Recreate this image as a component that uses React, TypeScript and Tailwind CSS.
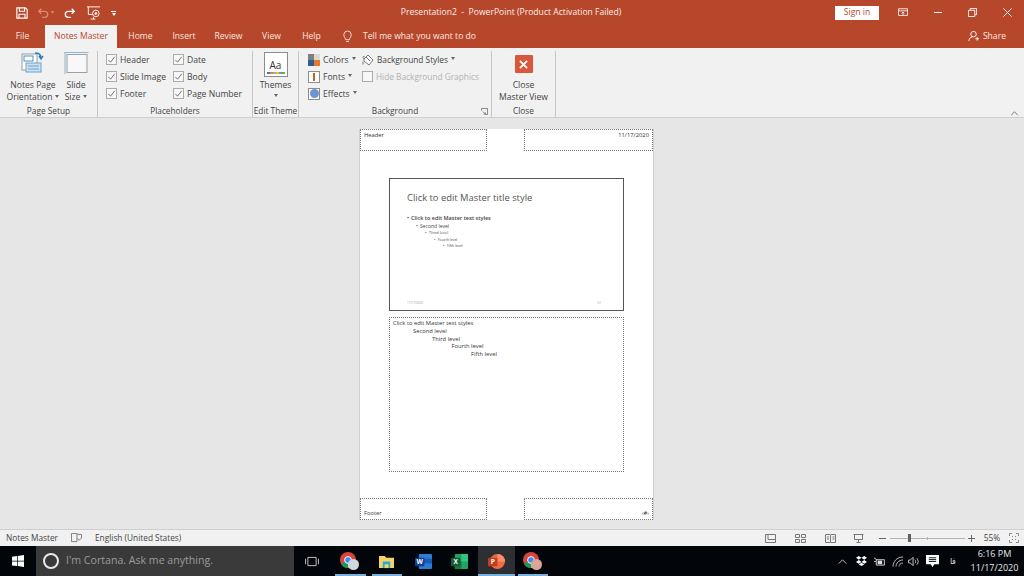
import React from "react";

const Check = ({ label, disabled }: { label: string; disabled?: boolean }) => (
  <div className="flex items-center h-[17px] whitespace-nowrap">
    <div className="w-[11px] h-[11px] border border-[#ababab] bg-[#f7f7f7] flex items-center justify-center">
      {!disabled && (
        <svg viewBox="0 0 10 10" className="w-[9px] h-[9px]" fill="none" stroke="#666" strokeWidth="1">
          <path d="M1.5 5.500 L4 8 L8.500 2" />
        </svg>
      )}
    </div>
    <span className={`ml-[3px] ${disabled ? "text-[#b1b1b1]" : "text-[#444]"}`}>{label}</span>
  </div>
);

const Caret = () => (
  <span className="inline-block ml-[3px] mb-[2px] w-0 h-0 border-x-[2.5px] border-x-transparent border-t-[3px] border-t-[#666] align-middle" />
);

const Group = ({ label, w, children, launcher }: { label: string; w: string; children: React.ReactNode; launcher?: boolean }) => (
  <div className={`${w} relative flex flex-col border-r border-[#c6c6c6] h-full`}>
    <div className="flex-1 min-h-0">{children}</div>
    <div className="h-[12px] leading-[12px] text-center text-[#444] text-[8.3px] whitespace-nowrap">{label}</div>
    {launcher && (
      <svg viewBox="0 0 8 8" className="absolute right-[3px] bottom-[2px] w-[7px] h-[7px]" fill="none" stroke="#777" strokeWidth="1">
        <path d="M.5 3V.5h7v7H5M2 4l3 3M5 5v2H3" />
      </svg>
    )}
  </div>
);

const Tab = ({ label, w }: { label: string; w: string }) => (
  <div className={`${w} h-full flex items-center justify-center text-[#f8e7e1]`}>{label}</div>
);

const Dashed = ({ w, align, valign, children }: { w: string; align: string; valign: string; children?: React.ReactNode }) => (
  <div className={`${w} h-[22px] border border-dotted border-[#777] flex ${align} ${valign} px-[3px] py-[1px] text-[5.8px] leading-[9px] text-[#333]`}>
    {children}
  </div>
);

const TaskApp = ({ active, underline = true, children }: { active?: boolean; underline?: boolean; children: React.ReactNode }) => (
  <div className={`w-[36.5px] h-full relative flex items-center justify-center ${active ? "bg-[#2d2f33]" : ""}`}>
    {children}
    {underline && <div className={`absolute bottom-0 h-[2px] bg-[#76b0dc] ${active ? "left-0 right-0" : "left-[3px] right-[3px]"}`} />}
  </div>
);

const Chrome = ({ face }: { face: string }) => (
  <svg viewBox="0 0 20 20" className="w-[20px] h-[20px]">
    <circle cx="8" cy="9" r="8" fill="#db4437" />
    <path d="M8 9 L1 13 A8 8 0 0 0 8 17 Z" fill="#0f9d58" />
    <path d="M8 9 L8 17 A8 8 0 0 0 16 9 Z" fill="#f4b400" />
    <circle cx="8" cy="9" r="3.400" fill="#4285f4" stroke="#fff" strokeWidth="1" />
    <circle cx="13.500" cy="13.500" r="5.500" fill={face} />
  </svg>
);

const Level = ({ pad, size, line, bold, children }: { pad: string; size: string; line: string; bold?: boolean; children: string }) => (
  <div className={`flex ${pad} ${size} ${line} ${bold ? "font-semibold" : ""}`}>
    <span className="w-[4px] shrink-0">•</span>
    {children}
  </div>
);

export default function App() {
  return (
    <div className="w-[1024px] h-[576px] overflow-hidden flex flex-col bg-[#e6e6e6] text-[8.6px] font-['Open_Sans',sans-serif]">
      {/* title bar */}
      <div className="h-[25px] bg-[#b7472a] flex items-center text-white shrink-0">
        <div className="w-[400px] flex items-center">
          <svg viewBox="0 0 14 14" className="w-[12px] h-[12px] ml-[16px]" fill="none" stroke="#fff" strokeWidth="1.300">
            <path d="M1 1h10l2 2v10H1zM4 1v4h6V1M3.500 13V8.500h7V13" />
          </svg>
          <svg viewBox="0 0 14 14" className="w-[12px] h-[12px] ml-[9px]" fill="none" stroke="#d98a72" strokeWidth="1.500">
            <path d="M5 2 L2 5 L5 8M2 5h7a3 3 0 0 1 0 7H6" />
          </svg>
          <span className="ml-[2px] text-[6px] text-[#d98a72]">▾</span>
          <svg viewBox="0 0 14 14" className="w-[12px] h-[12px] ml-[10px]" fill="none" stroke="#fff" strokeWidth="1.500">
            <path d="M9 2 L12 5 L9 8M12 5H5a3 3 0 0 0 0 7h3" />
          </svg>
          <svg viewBox="0 0 16 16" className="w-[15px] h-[15px] ml-[10px]" fill="none" stroke="#fff" strokeWidth="1">
            <path d="M1 2h14M2.500 2v8h5M8 13v2M5 15h5" />
            <circle cx="10.500" cy="9" r="3.500" />
            <circle cx="10.500" cy="9" r="1" fill="#fff" />
          </svg>
          <span className="ml-[10px] w-[5px] border-t border-white h-[4px] flex items-start justify-center">
            <span className="w-0 h-0 mt-[1px] border-x-[2.5px] border-x-transparent border-t-[3px] border-t-white" />
          </span>
        </div>
        <div className="w-[222px] text-center text-[#fbeee9] whitespace-nowrap">Presentation2 &nbsp;-&nbsp; PowerPoint (Product Activation Failed)</div>
        <div className="flex-1 flex items-center justify-end">
          <div className="w-[44px] h-[14px] bg-white text-[#b7472a] flex items-center justify-center">Sign in</div>
          <svg viewBox="0 0 12 10" className="w-[10px] h-[9px] ml-[19px]" fill="none" stroke="#fff">
            <path d="M.5.5h11v8H.5zM.5 3h11M6 8V4.500M4.500 6 6 4.500 7.500 6" />
          </svg>
          <div className="w-[8px] border-t border-white ml-[26px]" />
          <svg viewBox="0 0 10 10" className="w-[9px] h-[9px] ml-[26px]" fill="none" stroke="#fff">
            <path d="M.5 2.500h7v7h-7zM2.500 2.500v-2h7v7h-2" />
          </svg>
          <svg viewBox="0 0 10 10" className="w-[9px] h-[9px] ml-[26px] mr-[12px]" fill="none" stroke="#fff">
            <path d="M.5.5l9 9M9.500.5l-9 9" />
          </svg>
        </div>
      </div>

      {/* tabs */}
      <div className="h-[23px] bg-[#b7472a] flex items-center shrink-0">
        <Tab label="File" w="w-[45px]" />
        <div className="w-[72px] h-full bg-[#f1f1f1] text-[#b7472a] flex items-center justify-center">Notes Master</div>
        <Tab label="Home" w="w-[47px]" />
        <Tab label="Insert" w="w-[40px]" />
        <Tab label="Review" w="w-[49px]" />
        <Tab label="View" w="w-[37px]" />
        <Tab label="Help" w="w-[43px]" />
        <svg viewBox="0 0 12 14" className="w-[11px] h-[13px] ml-[9px]" fill="none" stroke="#f8e7e1">
          <path d="M4 10.500C4 8.500 2 8 2 5a4 4 0 0 1 8 0c0 3-2 3.500-2 5.500zM4.500 12.500h3" />
        </svg>
        <span className="ml-[10px] text-[#f8e7e1]">Tell me what you want to do</span>
        <div className="flex-1 flex justify-end items-center pr-[18px] text-[#f8e7e1]">
          <svg viewBox="0 0 12 12" className="w-[11px] h-[12px] mr-[4px]" fill="none" stroke="#fff">
            <circle cx="6" cy="4" r="3" />
            <path d="M1 11.500c0-3 2-4.500 4-4.500M8 9h4M10 7v4" />
          </svg>
          Share
        </div>
      </div>

      {/* ribbon */}
      <div className="h-[70px] bg-[#f1f1f1] border-b border-[#cfcfcf] shrink-0 flex pt-[3px] relative text-[#444] leading-[12px]">
        <Group label="Page Setup" w="w-[98px]">
          <div className="flex">
            <div className="w-[66px] flex flex-col items-center">
              <svg viewBox="0 0 24 24" className="w-[24px] h-[24px]" fill="none">
                <rect x="1" y="3" width="15" height="16" fill="#fff" stroke="#9a9a9a" />
                <rect x="3" y="5" width="9" height="5" fill="#fff" stroke="#4a90c8" />
                <rect x="5" y="12" width="15" height="9" fill="#cfe1f2" stroke="#6ba1cf" />
                <path d="M7 15h11M7 18h11" stroke="#6ba1cf" />
                <path d="M14 2c4 0 6 1 6 5M18 5l2 3 2-3" stroke="#2f7dc0" strokeWidth="1.500" />
              </svg>
              <div className="text-center mt-[4px] whitespace-nowrap">
                Notes Page
                <br />
                Orientation<Caret />
              </div>
            </div>
            <div className="w-[20px] flex flex-col items-center">
              <svg viewBox="0 0 24 24" className="w-[25px] h-[24px] shrink-0" fill="none">
                <rect x="2.500" y="3.500" width="20" height="18" fill="#f8f8f8" stroke="#a0a0a0" />
                <path d="M.5 1v22M0 1.500h24" stroke="#8bb4d8" />
              </svg>
              <div className="text-center mt-[4px] whitespace-nowrap">
                Slide
                <br />
                Size<Caret />
              </div>
            </div>
          </div>
        </Group>
        <Group label="Placeholders" w="w-[155px]">
          <div className="flex pl-[8px]">
            <div className="w-[67px]">
              <Check label="Header" />
              <Check label="Slide Image" />
              <Check label="Footer" />
            </div>
            <div>
              <Check label="Date" />
              <Check label="Body" />
              <Check label="Page Number" />
            </div>
          </div>
        </Group>
        <Group label="Edit Theme" w="w-[46px]">
          <div className="flex flex-col items-center">
            <div className="mt-[1px] w-[24px] h-[25px] bg-white border border-[#8c8c8c] flex flex-col items-center justify-end pb-[2px]">
              <span className="text-[10px] leading-[12px] text-[#333]">Aa</span>
              <div className="flex mt-[1px]">
                <span className="w-[3px] h-[2px] bg-[#4472c4]" />
                <span className="w-[3px] h-[2px] bg-[#ed7d31]" />
                <span className="w-[3px] h-[2px] bg-[#a5a5a5]" />
                <span className="w-[3px] h-[2px] bg-[#ffc000]" />
                <span className="w-[3px] h-[2px] bg-[#5b9bd5]" />
                <span className="w-[3px] h-[2px] bg-[#70ad47]" />
              </div>
            </div>
            <div className="mt-[2px] text-center">Themes</div>
            <span className="mt-[3px] w-0 h-0 border-x-[2.5px] border-x-transparent border-t-[3px] border-t-[#666]" />
          </div>
        </Group>
        <Group label="Background" w="w-[193px]" launcher>
          <div className="flex pl-[9px]">
            <div className="w-[54px]">
              <div className="flex items-center h-[17px]">
                <svg viewBox="0 0 12 12" className="w-[12px] h-[12px] mr-[3px]">
                  <rect width="6" height="6" fill="#7f7f7f" />
                  <rect x="6" width="6" height="6" fill="#d9d9d9" />
                  <rect y="6" width="6" height="6" fill="#2f5d8f" />
                  <rect x="6" y="6" width="6" height="6" fill="#e8762d" />
                </svg>
                Colors<Caret />
              </div>
              <div className="flex items-center h-[17px]">
                <div className="w-[12px] h-[12px] mr-[3px] border border-[#8c8c8c] bg-white flex items-center justify-center">
                  <div className="w-[2px] h-[8px] bg-[#c0671f]" />
                </div>
                Fonts<Caret />
              </div>
              <div className="flex items-center h-[17px]">
                <div className="w-[12px] h-[12px] mr-[3px] border border-[#8c8c8c] bg-white flex items-center justify-center">
                  <div className="w-[9px] h-[9px] rounded-full bg-[#6f94d6]" />
                </div>
                Effects<Caret />
              </div>
            </div>
            <div className="text-[8.3px]">
              <div className="flex items-center h-[17px] whitespace-nowrap">
                <svg viewBox="0 0 12 12" className="w-[12px] h-[12px] mr-[3px]" fill="none" stroke="#777">
                  <path d="M2 5 6 1l5 5-4 5-5-4z" fill="#fff" />
                  <path d="M2 5C.5 4 .5 2 2.500 2.500M4 3l4 4" />
                  <path d="M1 7.500v3" stroke="#9a9a9a" strokeWidth="1.500" />
                </svg>
                Background Styles<Caret />
              </div>
              <Check label="Hide Background Graphics" disabled />
            </div>
          </div>
        </Group>
        <Group label="Close" w="w-[64px]">
          <div className="flex flex-col items-center">
            <div className="mt-[4px] w-[18px] h-[18px] rounded-[1px] bg-[#d9583b] flex items-center justify-center">
              <svg viewBox="0 0 10 10" className="w-[9px] h-[9px]" fill="none" stroke="#fff" strokeWidth="2">
                <path d="M1 1l8 8M9 1l-8 8" />
              </svg>
            </div>
            <div className="text-center mt-[6px] whitespace-nowrap">
              Close
              <br />
              Master View
            </div>
          </div>
        </Group>
        <svg viewBox="0 0 10 6" className="absolute right-[5px] bottom-[1px] w-[9px] h-[5px]" fill="none" stroke="#666">
          <path d="M1 5l4-4 4 4" />
        </svg>
      </div>

      {/* canvas */}
      <div className="flex-1 min-h-0 flex justify-center pt-[11px] pr-[11px] bg-[#e6e6e6] border-b border-[#cfcfcf]">
        <div className="w-[295px] h-[391px] bg-white border-x border-[#d0d0d0] flex flex-col">
          <div className="flex justify-between">
            <Dashed w="w-[127px]" align="justify-start" valign="items-start">Header</Dashed>
            <Dashed w="w-[129px]" align="justify-end" valign="items-start">11/17/2020</Dashed>
          </div>
          <div className="mx-[29px] mt-[27px] h-[133px] border border-[#555] flex flex-col pl-[17px] pr-[4px] text-[#444]">
            <div className="mt-[13px] text-[9.4px] leading-[12px] text-[#555]">Click to edit Master title style</div>
            <div className="mt-[10px]" />
            <Level pad="pl-0" size="text-[5.500px]" line="leading-[9px]" bold>Click to edit Master text styles</Level>
            <Level pad="pl-[9px]" size="text-[5px]" line="leading-[7px]">Second level</Level>
            <Level pad="pl-[18px]" size="text-[4px]" line="leading-[6.500px]">Third level</Level>
            <Level pad="pl-[27px]" size="text-[3.500px]" line="leading-[6px]">Fourth level</Level>
            <Level pad="pl-[36px]" size="text-[3.500px]" line="leading-[6px]">Fifth level</Level>
            <div className="mt-auto mb-[5px] flex justify-between text-[3px] leading-[3px] text-[#999] pr-[18px]">
              <span>11/17/2020</span>
              <span>##</span>
            </div>
          </div>
          <div className="mx-[29px] mt-[6px] h-[155px] border border-dotted border-[#777] px-[3px] pt-[2px] text-[5.800px] leading-[7.750px] text-[#333]">
            <div>Click to edit Master text styles</div>
            <div className="pl-[20px]">Second level</div>
            <div className="pl-[39px]">Third level</div>
            <div className="pl-[58.500px]">Fourth level</div>
            <div className="pl-[78px]">Fifth level</div>
          </div>
          <div className="flex justify-between mt-auto">
            <Dashed w="w-[127px]" align="justify-start" valign="items-end">Footer</Dashed>
            <Dashed w="w-[129px]" align="justify-end" valign="items-end">‹#›</Dashed>
          </div>
        </div>
      </div>

      {/* status bar */}
      <div className="h-[16px] bg-[#f1f1f1] shrink-0 flex items-center text-[#444] text-[8.3px]">
        <span className="ml-[6px] w-[65px]">Notes Master</span>
        <svg viewBox="0 0 12 11" className="w-[11px] h-[10px]" fill="none" stroke="#777">
          <path d="M.5.5h6v9h-6zM6.500 1.500h5v4M7 6l2 2 3-3" />
        </svg>
        <span className="ml-[13px]">English (United States)</span>
        <div className="flex-1 flex items-center justify-end pr-[5px]">
          <svg viewBox="0 0 11 9" className="w-[11px] h-[9px]" fill="none" stroke="#777">
            <path d="M.5.5h10v8H.5zM3 .5v5h5.500M3 5.500h7.500" />
          </svg>
          <svg viewBox="0 0 11 9" className="w-[11px] h-[9px] ml-[19px]" fill="none" stroke="#777">
            <path d="M.5.5h4v3h-4zM6.500.5h4v3h-4zM.5 5.500h4v3h-4zM6.500 5.500h4v3h-4z" />
          </svg>
          <svg viewBox="0 0 11 9" className="w-[11px] h-[9px] ml-[19px]" fill="none" stroke="#777">
            <path d="M.5.5h4.500l.5 1 .5-1h4.500v8H6l-.5 .5L5 8.500H.5zM5.500 1.500v7M2 3h2M2 5h2M7.500 3h2M7.500 5h2" />
          </svg>
          <svg viewBox="0 0 11 9" className="w-[11px] h-[9px] ml-[17px]" fill="none" stroke="#777">
            <path d="M.5.500h10M1.500 1v4.500h8V1M5.500 5.500V8.500M3.500 8.500h4" />
          </svg>
          <div className="w-[7px] border-t border-[#666] ml-[15px]" />
          <div className="relative w-[75px] h-[9px] ml-[4px] mr-[3px] flex items-center">
            <div className="w-full border-t border-[#b5b5b5]" />
            <div className="absolute left-[18px] w-[3px] h-[8px] bg-[#5f5f5f]" />
            <div className="absolute left-[37px] h-[3px] border-l border-[#b5b5b5]" />
          </div>
          <div className="relative w-[7px] h-[7px]">
            <div className="absolute top-[3px] w-[7px] border-t border-[#666]" />
            <div className="absolute left-[3px] h-[7px] border-l border-[#666]" />
          </div>
          <span className="ml-[8px] w-[17px] text-right">55%</span>
          <svg viewBox="0 0 10 10" className="w-[10px] h-[10px] ml-[9px]" fill="none" stroke="#888">
            <path d="M.5 3V.5H3M7 .5h2.500V3M.5 7v2.500H3M7 9.500h2.500V7M3 3l1 1M7 3 6 4M3 7l1-1M7 7 6 6" />
          </svg>
        </div>
      </div>

      {/* taskbar */}
      <div className="h-[30px] bg-[#02060a] shrink-0 flex items-center text-white">
        <div className="w-[36px] flex justify-center">
          <svg viewBox="0 0 12 12" className="w-[12px] h-[12px]" fill="#fff">
            <path d="M0 1.700 5 1v4.700H0zM5.700.900 12 0v5.700H5.700zM0 6.400h5v4.700l-5-.7zM5.700 6.400H12V12l-6.300-.9z" />
          </svg>
        </div>
        <div className="w-[258px] h-full bg-[#3a3a3a] flex items-center pl-[7px] text-[10.600px] text-[#9a9a9a]">
          <div className="w-[16px] h-[16px] rounded-full border-2 border-[#e8e8e8] mr-[7px]" />
          I'm Cortana. Ask me anything.
        </div>
        <svg viewBox="0 0 16 12" className="w-[16px] h-[11px] ml-[10px]" fill="none" stroke="#ccc">
          <path d="M3.500 1.500h9v9h-9zM1 3v6M15 3v6" />
        </svg>
        <div className="flex h-full ml-[12px] items-center">
          <TaskApp><Chrome face="#cfd8dc" /></TaskApp>
          <TaskApp>
            <svg viewBox="0 0 18 16" className="w-[17px] h-[15px]">
              <path d="M1 2h6l2 2h8v11H1z" fill="#f6d365" />
              <rect x="5" y="8" width="8" height="7" fill="#29a8e0" />
              <rect x="7" y="11" width="4" height="4" fill="#f6d365" />
            </svg>
          </TaskApp>
          <TaskApp underline={false}>
            <svg viewBox="0 0 20 18" className="w-[19px] h-[17px]">
              <rect x="5" y="1" width="14" height="16" rx="1" fill="#2b7cd3" />
              <rect x="5" y="6" width="14" height="5" fill="#185abd" />
              <rect x="1" y="5" width="10" height="9" rx="1" fill="#103f91" />
              <text x="6" y="12" fontSize="7" fontWeight="700" fill="#fff" textAnchor="middle" fontFamily="Open Sans">W</text>
            </svg>
          </TaskApp>
          <TaskApp underline={false}>
            <svg viewBox="0 0 20 18" className="w-[19px] h-[17px]">
              <rect x="5" y="1" width="14" height="16" rx="1" fill="#21a366" />
              <rect x="12" y="1" width="7" height="8" fill="#33c481" />
              <rect x="5" y="9" width="7" height="8" fill="#107c41" />
              <rect x="1" y="5" width="10" height="9" rx="1" fill="#185c37" />
              <text x="6" y="12" fontSize="7" fontWeight="700" fill="#fff" textAnchor="middle" fontFamily="Open Sans">X</text>
            </svg>
          </TaskApp>
          <TaskApp active>
            <svg viewBox="0 0 20 18" className="w-[19px] h-[17px]">
              <circle cx="11" cy="9" r="8" fill="#ed6c47" />
              <path d="M11 1a8 8 0 0 1 8 8h-8z" fill="#ff8f6b" />
              <rect x="1" y="5" width="10" height="9" rx="1" fill="#c43e1c" />
              <text x="6" y="12" fontSize="7" fontWeight="700" fill="#fff" textAnchor="middle" fontFamily="Open Sans">P</text>
            </svg>
          </TaskApp>
          <TaskApp><Chrome face="#d9a79a" /></TaskApp>
        </div>
        <div className="flex-1 flex items-center justify-end h-full">
          <svg viewBox="0 0 10 6" className="w-[9px] h-[5px]" fill="none" stroke="#ddd">
            <path d="M.5 5.500 5 1l4.500 4.500" />
          </svg>
          <svg viewBox="0 0 12 11" className="w-[11px] h-[10px] ml-[9px]" fill="#fff">
            <path d="M3 0 6 2 3 4 0 2zM9 0l3 2-3 2-3-2zM3 4.500 6 6.500 3 8.500 0 6.500zM9 4.500l3 2-3 2-3-2zM3 9.300l3-1.800 3 1.800-3 1.700z" />
          </svg>
          <svg viewBox="0 0 13 10" className="w-[12px] h-[9px] ml-[5.500px]" fill="none" stroke="#ddd">
            <path d="M3.500 3h9v6h-9zM1 1l3 2M1 5h2" />
            <rect x="5" y="4" width="5" height="4" fill="#ddd" stroke="none" />
          </svg>
          <svg viewBox="0 0 12 11" className="w-[12px] h-[11px] ml-[7px]" fill="none" stroke="#bbb">
            <path d="M1 10.500C1 5.500 5 1 11 1M4 10.500C4 7.500 6.500 4 11 4M7 10.500C7 9 8.500 7 11 7" />
          </svg>
          <svg viewBox="0 0 13 11" className="w-[12px] h-[11px] ml-[4px]" fill="none" stroke="#ccc">
            <path d="M.5 4v3h2l3 3V1l-3 3zM7.500 3.500c1 1 1 3 0 4M9.500 2c2 2 2 5 0 7" />
          </svg>
          <svg viewBox="0 0 14 13" className="w-[13px] h-[12px] ml-[6.500px]" fill="#fff">
            <path d="M0 0h14v10H9l-2 3-2-3H0z" />
            <path d="M3 3h8M3 5h8M3 7h8" stroke="#02060a" />
          </svg>
          <span className="ml-[11px] text-[8px] text-[#ddd] w-[6px] font-['Noto_Sans',sans-serif]">فا</span>
          <div className="w-[48px] ml-[14.500px] mr-[5.500px] text-center text-[9px] leading-[14px] text-[#e6e6e6] whitespace-nowrap">
            <div>6:16 PM</div>
            <div>11/17/2020</div>
          </div>
        </div>
      </div>
    </div>
  );
}
